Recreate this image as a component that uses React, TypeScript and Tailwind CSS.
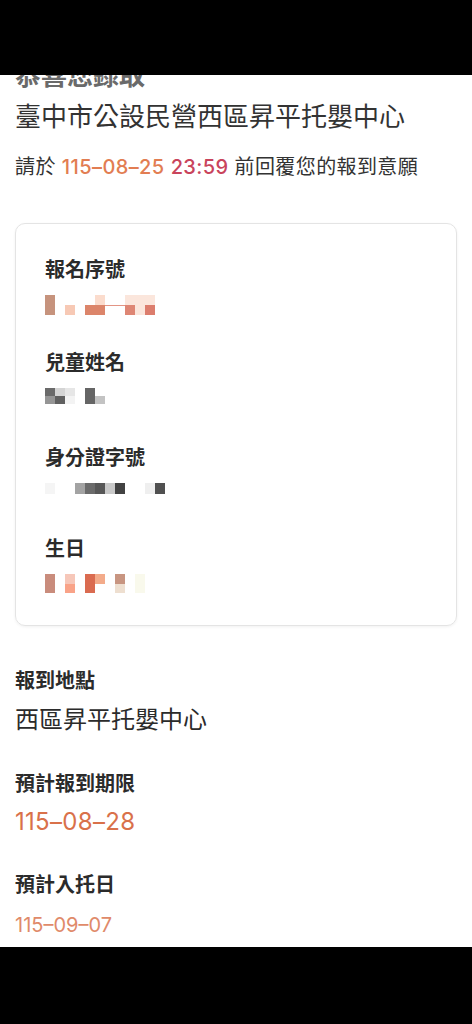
type Col = { top?: string; bottom?: string; dash?: boolean }

const serialCols: Col[] = [
  { top: "bg-[#c08870]", bottom: "bg-[#c08870]" },
  {},
  { bottom: "bg-[#f7c4ae]" },
  {},
  { bottom: "bg-[#d9785a]" },
  { top: "bg-[#fbd9c8]", bottom: "bg-[#d9785a]" },
  { dash: true },
  { dash: true },
  { top: "bg-[#fbe4d9]", bottom: "bg-[#db7a66]" },
  { top: "bg-[#fbe4d9]", bottom: "bg-[#fbe4d9]" },
  { top: "bg-[#fbe4d9]", bottom: "bg-[#d9705e]" },
]

const nameCols: Col[] = [
  { top: "bg-[#5a5a5a]", bottom: "bg-[#8a8a8a]" },
  { top: "bg-[#d0d0d0]", bottom: "bg-[#4f4f4f]" },
  { top: "bg-[#e4e4e4]", bottom: "bg-[#f2f2f2]" },
  {},
  { top: "bg-[#555555]", bottom: "bg-[#555555]" },
  { bottom: "bg-[#bdbdbd]" },
]

const idCols: Col[] = [
  { top: "bg-[#f4f4f4]", bottom: "bg-[#f4f4f4]" },
  {},
  {},
  { top: "bg-[#9a9a9a]", bottom: "bg-[#9a9a9a]" },
  { top: "bg-[#5c5c5c]", bottom: "bg-[#5c5c5c]" },
  { top: "bg-[#454545]", bottom: "bg-[#454545]" },
  { top: "bg-[#c4c4c4]", bottom: "bg-[#c4c4c4]" },
  { top: "bg-[#2e2e2e]", bottom: "bg-[#2e2e2e]" },
  {},
  {},
  { top: "bg-[#eeeeee]", bottom: "bg-[#eeeeee]" },
  { top: "bg-[#3e3e3e]", bottom: "bg-[#3e3e3e]" },
]

const birthCols: Col[] = [
  { top: "bg-[#c4806e]", bottom: "bg-[#c4806e]" },
  {},
  { top: "bg-[#f6c2b2]", bottom: "bg-[#f99a7c]" },
  {},
  { top: "bg-[#d65c3e]", bottom: "bg-[#d65c3e]" },
  { top: "bg-[#f2a27e]" },
  {},
  { top: "bg-[#c38a74]", bottom: "bg-[#eddccb]" },
  {},
  { top: "bg-[#f9f9ea]", bottom: "bg-[#f9f9ea]" },
]

// pixelated (censored) value
function Mosaic({ cols, height }: { cols: Col[]; height: string }) {
  return (
    <div className={`flex ${height} opacity-90 blur-[0.4px]`}>
      {cols.map((c, i) => (
        <div key={i} className="flex w-[10px] flex-col">
          {c.dash ? (
            <div className="flex flex-1 items-center">
              <div className="h-px w-full bg-[#e08a78]" />
            </div>
          ) : (
            <>
              <div className={`flex-1 ${c.top ?? ""}`} />
              <div className={`flex-1 ${c.bottom ?? ""}`} />
            </>
          )}
        </div>
      ))}
    </div>
  )
}

function Field({ label, cols, height, mt }: { label: string; cols: Col[]; height: string; mt: string }) {
  return (
    <div className={mt}>
      <div className="text-[20px] font-bold leading-[28px] text-[#2b2b2b]">{label}</div>
      <div className="mt-[11px]">
        <Mosaic cols={cols} height={height} />
      </div>
    </div>
  )
}

export default function App() {
  return (
    <div
      className="flex h-[1024px] w-[472px] flex-col bg-black"
      style={{ fontFamily: 'Inter, "Noto Sans CJK TC", "Noto Sans", sans-serif' }}
    >
      <div className="h-[75px] shrink-0 bg-black" />
      <div className="h-[872px] shrink-0 overflow-hidden bg-white px-[15px]">
        <div className="-mt-[12px] text-[26px] font-bold leading-[26px] text-[#6a6a6a]">恭喜您錄取</div>
        <div className="mt-[13px] text-[26px] leading-[30px] text-[#333333]">臺中市公設民營西區昇平托嬰中心</div>
        <div className="mt-[22px] text-[20px] leading-[26px] tracking-[0.4px] text-[#333333]">
          請於 <span className="font-medium text-[#e27d52]">115–08–25</span>{" "}
          <span className="font-medium text-[#c9445c]">23:59</span> 前回覆您的報到意願
        </div>

        <div className="mt-[43px] rounded-[10px] border border-[#e4e4e4] pt-[32px] pb-[32px] pl-[29px] shadow-[0_1px_3px_rgba(0,0,0,0.06)]">
          <Field label="報名序號" cols={serialCols} height="h-[20px]" mt="" />
          <Field label="兒童姓名" cols={nameCols} height="h-[16px]" mt="mt-[34px]" />
          <Field label="身分證字號" cols={idCols} height="h-[11px]" mt="mt-[40px]" />
          <Field label="生日" cols={birthCols} height="h-[19px]" mt="mt-[41px]" />
        </div>

        <div className="mt-[41px] text-[20px] font-bold leading-[28px] text-[#2b2b2b]">報到地點</div>
        <div className="mt-[10px] text-[24px] leading-[30px] text-[#2b2b2b]">西區昇平托嬰中心</div>

        <div className="mt-[35px] text-[20px] font-bold leading-[28px] text-[#2b2b2b]">預計報到期限</div>
        <div className="mt-[9px] text-[24px] leading-[30px] tracking-[0.3px] text-[#d9714a]">115–08–28</div>

        <div className="mt-[34px] text-[20px] font-bold leading-[28px] text-[#2b2b2b]">預計入托日</div>
        <div className="mt-[12px] text-[20px] leading-[28px] text-[#e08a6a]">115–09–07</div>
      </div>
      <div className="flex-1 bg-black" />
    </div>
  )
}
